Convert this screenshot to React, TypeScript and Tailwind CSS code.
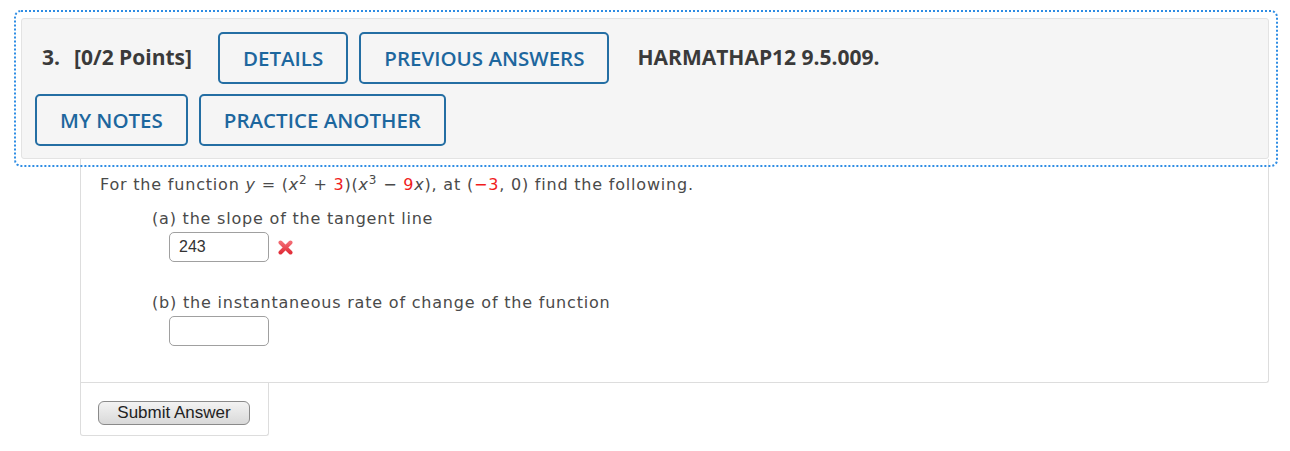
const HeaderButton = ({ label }: { label: string }) => (
  <button className="h-[52px] px-[23px] border-2 border-[#246ea3] rounded-[5px] text-[#1d679e] text-[20.5px] font-semibold leading-none">
    {label}
  </button>
);

const WrongMark = () => (
  <svg width="15" height="15" viewBox="0 0 15 15" className="ml-[9px]">
    <defs>
      <linearGradient id="wm" x1="0" y1="0" x2="0" y2="1">
        <stop offset="0" stopColor="#f26a72" />
        <stop offset="1" stopColor="#e2303b" />
      </linearGradient>
    </defs>
    <path d="M2.5 2.5 L12.5 12.5 M12.5 2.5 L2.5 12.5" stroke="url(#wm)" strokeWidth="4" strokeLinecap="round" />
  </svg>
);

const Red = ({ children }: { children: React.ReactNode }) => <span className="text-[#f01c1c]">{children}</span>;

const App = () => {
  return (
    <div className="w-[1290px] h-[451px] bg-white relative overflow-hidden">
      <div className="pt-[10px] pl-[14px] relative z-10">
        <div className="w-[1264px] h-[157px] border-2 border-dotted border-[#2f8de4] rounded-[7px] pt-[6px] pl-[5px]">
          <div
            className="w-[1248px] h-[141px] bg-[#f5f5f5] border border-[#e3e3e3] rounded-[3px] pt-[13px] pl-[13px] flex flex-col gap-[10px]"
            style={{ fontFamily: '"Open Sans", sans-serif' }}
          >
            <div className="flex items-center">
              <span className="ml-[7px] text-[21px] font-bold text-[#3a3a3a]">3.</span>
              <span className="ml-[14px] text-[21px] font-bold text-[#3a3a3a]">[0/2 Points]</span>
              <div className="ml-[26px] flex gap-[11px]">
                <HeaderButton label="DETAILS" />
                <HeaderButton label="PREVIOUS ANSWERS" />
              </div>
              <span className="ml-[28px] text-[21px] font-bold text-[#3a3a3a]">HARMATHAP12 9.5.009.</span>
            </div>
            <div className="flex gap-[11px]">
              <HeaderButton label="MY NOTES" />
              <HeaderButton label="PRACTICE ANOTHER" />
            </div>
          </div>
        </div>
      </div>

      <div className="ml-[80px] -mt-[8px]">
        <div
          className="w-[1189px] h-[224px] border-l border-r border-b border-[#dddddd] rounded-br-[3px] pl-[19px] pt-[14px] text-[16px] tracking-[0.8px] text-[#4a4a4a]"
          style={{ fontFamily: '"DejaVu Sans", Verdana, sans-serif' }}
        >
          <p className="leading-[24px]">
            For the function <i>y</i> = (<i>x</i>
            <sup className="text-[12px]">2</sup> + <Red>3</Red>)(<i>x</i>
            <sup className="text-[12px]">3</sup> − <Red>9</Red>
            <i>x</i>), at (<Red>−3</Red>, 0) find the following.
          </p>
          <div className="pl-[52px] mt-[10px]">
            <p className="leading-[24px]">(a) the slope of the tangent line</p>
            <div className="flex items-center mt-[1px] pl-[17px] tracking-normal">
              <div
                className="w-[100px] h-[30px] border border-[#a0a0a0] rounded-[5px] bg-white flex items-center pl-[9px] text-[16px] text-[#333]"
                style={{ fontFamily: '"Liberation Sans", Arial, sans-serif' }}
              >
                243
              </div>
              <WrongMark />
            </div>
            <p className="leading-[24px] mt-[29px]">(b) the instantaneous rate of change of the function</p>
            <div className="mt-[1px] pl-[17px]">
              <div className="w-[100px] h-[30px] border border-[#a0a0a0] rounded-[5px] bg-white" />
            </div>
          </div>
        </div>
        <div className="w-[189px] h-[53px] border-l border-r border-b border-[#dddddd] rounded-b-[3px] pl-[17px] pt-[17px]">
          <button
            className="w-[152px] h-[24px] border border-[#8a8a8a] rounded-[6px] bg-gradient-to-b from-[#f3f3f3] to-[#d9d9d9] text-[17px] leading-none text-[#222]"
            style={{ fontFamily: '"Liberation Sans", Arial, sans-serif' }}
          >
            Submit Answer
          </button>
        </div>
      </div>
    </div>
  );
};

export default App;
